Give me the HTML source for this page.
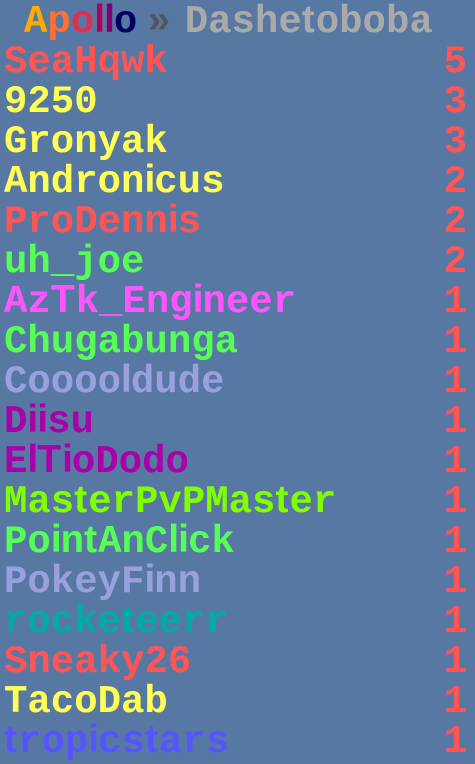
<!DOCTYPE html>
<html><head><meta charset="utf-8"><style>
html,body{margin:0;padding:0;}
body{width:475px;height:762px;background:#5878a4;position:relative;overflow:hidden;font-family:"Liberation Mono",monospace;font-weight:bold;font-size:39px;}
.r{position:absolute;left:4px;right:8px;height:40px;line-height:40px;white-space:nowrap;margin-top:2px;}
.n{position:absolute;right:0;top:0;color:#ff5555;}
i,u{font-style:normal;text-decoration:none;font-family:"Liberation Sans",sans-serif;font-size:39px;line-height:1px;}
i{letter-spacing:-1px;}
u{letter-spacing:1px;}
</style></head><body>
<div class="r" style="top:0;left:24px">
<span style="color:#ffaa00">A</span><span style="color:#ff7030">p</span><span style="color:#e03050">o</span><i style="color:#b0005a">l</i><i style="color:#800070">l</i><span style="color:#000060">o</span><span style="color:#555555;margin-left:10px">»</span><span style="color:#aaaaaa;margin-left:14px">Dashe<u>t</u>oboba</span></div>
<div class="r" style="top:40px;color:#ff5555">SeaHqwk<span class="n">5</span></div>
<div class="r" style="top:80px;color:#ffff55">9250<span class="n">3</span></div>
<div class="r" style="top:120px;color:#ffff55">Gronyak<span class="n">3</span></div>
<div class="r" style="top:160px;color:#ffff55">Andron<i>i</i>cus<span class="n">2</span></div>
<div class="r" style="top:200px;color:#ff5555">ProDenn<i>i</i>s<span class="n">2</span></div>
<div class="r" style="top:240px;color:#55ff55">uh_joe<span class="n">2</span></div>
<div class="r" style="top:280px;color:#ff55ff">Az<u>T</u>k_Eng<i>i</i>neer<span class="n">1</span></div>
<div class="r" style="top:320px;color:#55ff55">Chugabunga<span class="n">1</span></div>
<div class="r" style="top:360px;color:#9aa0dd">Coooo<i>l</i>dude<span class="n">1</span></div>
<div class="r" style="top:400px;color:#aa00aa">D<i>i</i><i>i</i>su<span class="n">1</span></div>
<div class="r" style="top:440px;color:#aa00aa">E<i>l</i><u>T</u><i>i</i>oDodo<span class="n">1</span></div>
<div class="r" style="top:480px;color:#80ff00">Mas<u>t</u>erPvPMas<u>t</u>er<span class="n">1</span></div>
<div class="r" style="top:520px;color:#55ff55">Po<i>i</i>n<u>t</u>AnC<i>l</i><i>i</i>ck<span class="n">1</span></div>
<div class="r" style="top:560px;color:#9aa0dd">PokeyF<i>i</i>nn<span class="n">1</span></div>
<div class="r" style="top:600px;color:#00aaaa">rocke<u>t</u>eerr<span class="n">1</span></div>
<div class="r" style="top:640px;color:#ff5555">Sneaky26<span class="n">1</span></div>
<div class="r" style="top:680px;color:#ffff55">TacoDab<span class="n">1</span></div>
<div class="r" style="top:720px;color:#5555ff"><u>t</u>rop<i>i</i>cs<u>t</u>ars<span class="n">1</span></div>
</body></html>
